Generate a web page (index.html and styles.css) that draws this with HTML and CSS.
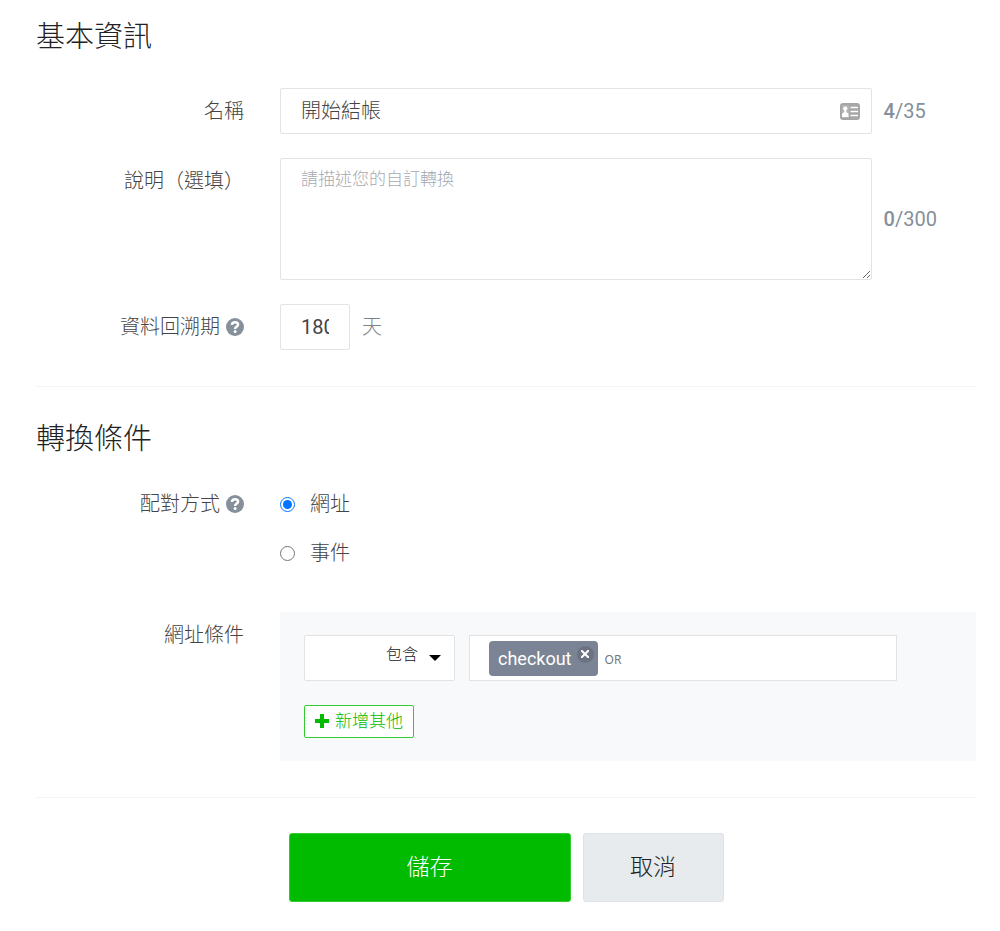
FILE: index.html
```html
<!DOCTYPE html>
<html lang="zh-Hant">
<head>
<meta charset="utf-8">
<meta name="viewport" content="width=device-width, initial-scale=1">
<title>自訂轉換</title>
<link rel="stylesheet" href="styles.css">
</head>
<body>
<form class="form">
  <section class="section">
    <h2 class="title">基本資訊</h2>
    <div class="rows">
      <div class="row">
        <label class="label" for="name">名稱</label>
        <div class="field">
          <div class="control wide">
            <input class="input" id="name" type="text" value="開始結帳">
            <svg class="card-icon" viewBox="0 0 20 17" aria-hidden="true">
              <rect x="1" y="1" width="18" height="15" rx="2" fill="#fff" stroke="#a6a6a6" stroke-width="2"/>
              <path d="M9 2h10v13H9z" fill="#a6a6a6"/>
              <path d="M2 2h7v13H2z" fill="#b4b4b4"/>
              <circle cx="5.300" cy="5.600" r="2.100" fill="#fff"/>
              <path d="M4.300 7h2v2.200l2.200 1.200V14H2v-3.600l2.300-1.200z" fill="#fff"/>
              <path d="M10.500 4.500H18M10.500 8.500H18M10.500 12.500H18" stroke="#fff" stroke-width="1.600"/>
            </svg>
          </div>
          <span class="count"><b>4</b>/35</span>
        </div>
      </div>
      <div class="row">
        <label class="label" for="desc">說明（選填）</label>
        <div class="field">
          <textarea class="input area wide" id="desc" placeholder="請描述您的自訂轉換"></textarea>
          <span class="count"><b>0</b>/300</span>
        </div>
      </div>
      <div class="row">
        <label class="label" for="days">資料回溯期
          <svg class="help" viewBox="0 0 18 18" aria-hidden="true">
            <circle cx="9" cy="9" r="9" fill="#85909b"/>
            <path d="M5.800 6.900Q6.200 4.200 9 4.200Q12.100 4.200 12.100 6.600Q12.100 7.800 10.600 8.700Q9.100 9.500 9.100 10.900" fill="none" stroke="#fff" stroke-width="2.500"/>
            <circle cx="9.100" cy="13.400" r="1.500" fill="#fff"/>
          </svg>
        </label>
        <div class="field">
          <input class="input days" id="days" type="text" inputmode="numeric" value="180">
          <span class="unit">天</span>
        </div>
      </div>
    </div>
  </section>

  <section class="section">
    <h2 class="title">轉換條件</h2>
    <div class="rows">
      <div class="row match" role="radiogroup" aria-labelledby="match-label">
        <span class="label" id="match-label">配對方式
          <svg class="help" viewBox="0 0 18 18" aria-hidden="true">
            <circle cx="9" cy="9" r="9" fill="#85909b"/>
            <path d="M5.800 6.900Q6.200 4.200 9 4.200Q12.100 4.200 12.100 6.600Q12.100 7.800 10.600 8.700Q9.100 9.500 9.100 10.900" fill="none" stroke="#fff" stroke-width="2.500"/>
            <circle cx="9.100" cy="13.400" r="1.500" fill="#fff"/>
          </svg>
        </span>
        <div class="options">
          <label class="option"><input class="radio" type="radio" name="match" checked>網址</label>
          <label class="option"><input class="radio" type="radio" name="match">事件</label>
        </div>
      </div>
      <div class="row">
        <label class="label" for="operator">網址條件</label>
        <div class="panel">
          <div class="condition">
            <div class="control operator">
              <select class="input select" id="operator"><option>包含</option></select>
              <svg class="caret" viewBox="0 0 12 6" aria-hidden="true"><path d="M0 0h12L6 6z" fill="#000"/></svg>
            </div>
            <div class="tags">
              <span class="tag">checkout
                <button class="remove" type="button" aria-label="移除 checkout">
                  <svg class="cross" viewBox="0 0 8 8" aria-hidden="true"><path d="M0 0l8 8M8 0L0 8" stroke="#fff" stroke-width="2"/></svg>
                </button>
              </span>
              <input class="tag-input" type="text" placeholder="OR" aria-label="網址關鍵字">
            </div>
          </div>
          <button class="add" type="button">
            <svg class="plus" viewBox="0 0 14 14" aria-hidden="true"><path d="M7 0v14M0 7h14" stroke="#0b0" stroke-width="4"/></svg>
            新增其他
          </button>
        </div>
      </div>
    </div>
  </section>

  <div class="actions">
    <button class="button save" type="submit">儲存</button>
    <button class="button cancel" type="button">取消</button>
  </div>
</form>
</body>
</html>
```

FILE: styles.css
```css
* {
  box-sizing: border-box;
}

body {
  margin: 0;
  background: #fff;
  color: #444;
  font: 300 20px/46px Roboto, "Noto Sans CJK TC", sans-serif;
}

input,
textarea,
select,
button {
  margin: 0;
  font: inherit;
  color: inherit;
}

.form {
  padding: 17px 24px 28px 36px;
}

.section {
  padding-bottom: 36px;
  margin-bottom: 32px;
  border-bottom: 1px solid #f3f3f3;
}

.title {
  margin: 0 0 31px;
  font-size: 29px;
  line-height: 40px;
  font-weight: 300;
  color: #222;
}

.section + .section .title {
  margin-bottom: 22px;
}

.rows {
  display: grid;
  gap: 24px;
}

.row {
  display: grid;
  grid-template-columns: 208px minmax(0, 1fr);
  column-gap: 36px;
}

.label {
  display: flex;
  align-items: center;
  justify-content: flex-end;
  gap: 6px;
  height: 46px;
}

.help {
  width: 18px;
  height: 18px;
}

.field {
  display: flex;
  align-items: center;
  gap: 12px;
}

.wide {
  flex: none;
  width: 85%;
}

.control {
  position: relative;
}

.input {
  display: block;
  width: 100%;
  height: 46px;
  padding: 0 20px;
  border: 1px solid #e3e3e3;
  border-radius: 2px;
  background: #fff;
}

.input.area {
  width: 85%;
  height: 122px;
  padding: 8px 20px;
  font-size: 17px;
  line-height: 24px;
  resize: vertical;
}

.area::placeholder {
  color: #a5a9b0;
}

.input.days {
  width: 70px;
  color: #444;
  font-weight: 400;
}

.card-icon {
  position: absolute;
  right: 12px;
  top: 15px;
  width: 20px;
  height: 17px;
}

.count {
  color: #85909b;
  font-weight: 400;
}

.count b {
  font-weight: 500;
}

.unit {
  color: #7c8186;
}

.match {
  margin-bottom: 12px;
}

.options {
  display: grid;
  gap: 3px;
}

.option {
  display: flex;
  align-items: center;
  gap: 15px;
}

.radio {
  width: 15px;
  height: 15px;
}

.panel {
  padding: 23px 24px;
  background: #f8f9fb;
}

.condition {
  display: flex;
  gap: 14px;
  padding-right: 55px;
  margin-bottom: 24px;
}

.operator {
  flex: none;
  width: 151px;
}

.select {
  appearance: none;
  padding: 0 36px 6px 20px;
  font-size: 16px;
  line-height: 24px;
  text-align-last: right;
  color: #222;
}

.caret {
  position: absolute;
  right: 14px;
  top: 20px;
  width: 12px;
  height: 6px;
}

.tags {
  flex: 1;
  min-width: 0;
  display: flex;
  align-items: center;
  gap: 7px;
  padding: 0 19px;
  border: 1px solid #e3e3e3;
  background: #fff;
}

.tag {
  display: flex;
  gap: 5px;
  height: 35px;
  padding: 0 4px 0 9px;
  border-radius: 4px;
  background: #7b8494;
  color: #fff;
  font-size: 18px;
  line-height: 35px;
  font-weight: 400;
}

.remove {
  display: grid;
  place-items: center;
  width: 17px;
  height: 17px;
  margin-top: 5px;
  padding: 0;
  border: 0;
  border-radius: 50%;
  background: #6b7382;
}

.cross {
  width: 8px;
  height: 8px;
}

.tag-input {
  flex: 1;
  min-width: 0;
  padding: 4px 0 0;
  border: 0;
  background: none;
  font: 400 12px/20px "Noto Sans", sans-serif;
}

.tag-input::placeholder {
  color: #777;
}

.add {
  display: flex;
  align-items: center;
  gap: 6px;
  height: 33px;
  padding: 0 10px 2px;
  border: 1px solid #3c3;
  border-radius: 2px;
  background: #fff;
  color: #0b0;
  font-size: 17px;
  line-height: 24px;
}

.plus {
  width: 14px;
  height: 14px;
}

.actions {
  display: flex;
  justify-content: center;
  gap: 12px;
  padding-top: 3px;
}

.button {
  height: 69px;
  border: 1px solid #dee2e6;
  border-radius: 3px;
  font-size: 23px;
}

.save {
  width: 30%;
  border-color: #3c3;
  background: #0b0;
  color: #fff;
}

.cancel {
  width: 15%;
  background: #e7ebee;
  color: #222;
}
```
